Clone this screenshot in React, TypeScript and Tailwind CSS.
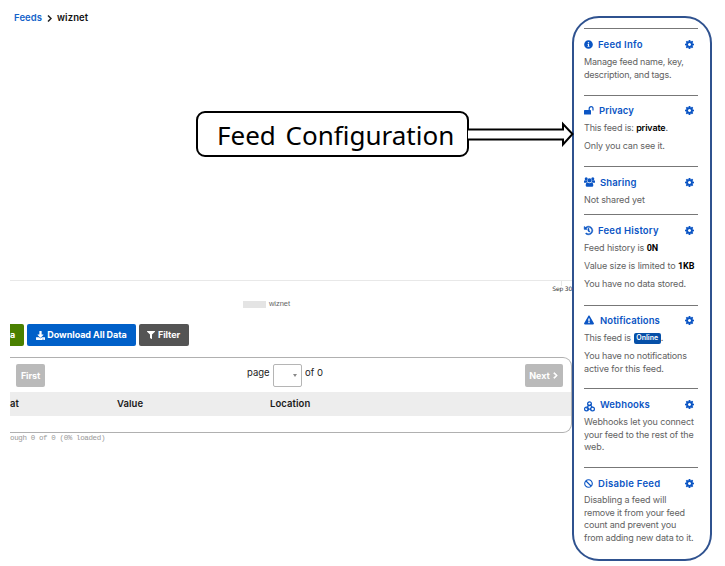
import type { ReactNode } from "react";
import {
  FaBan,
  FaChevronRight,
  FaDownload,
  FaExclamationTriangle,
  FaFilter,
  FaHistory,
  FaInfoCircle,
} from "react-icons/fa";

type SectionProps = {
  icon: ReactNode;
  title: string;
  titleClass: string;
  height: string;
  headClass?: string;
  bodyClass?: string;
  children: ReactNode;
};

function Gear() {
  return (
    <svg viewBox="0 128 1536 1536" className="ml-auto size-[9px]" fill="currentColor">
      <path d="M1024 896q0-106-75-181t-181-75-181 75-75 181 75 181 181 75 181-75 75-181zm512-109v222q0 12-8 23t-20 13l-185 28q-19 54-39 91 35 50 107 138 10 12 10 25t-9 23q-27 37-99 108t-94 71q-12 0-26-9l-138-108q-44 23-91 38-16 136-29 186-7 28-36 28h-222q-14 0-24.500-8.500t-11.500-21.500l-28-184q-49-16-90-37l-141 107q-10 9-25 9-14 0-25-11-126-114-165-168-7-10-7-23 0-12 8-23 15-21 51-66.500t54-70.500q-27-50-41-99l-183-27q-13-2-21-12.500t-8-23.500v-222q0-12 8-23t19-13l186-28q14-46 39-92-40-57-107-138-10-12-10-24 0-10 9-23 26-36 98.500-107.500t94.500-71.500q13 0 26 10l138 107q44-23 91-38 16-136 29-186 7-28 36-28h222q14 0 24.500 8.500t11.500 21.500l28 184q49 16 90 37l142-107q9-9 24-9 13 0 25 10 129 119 165 170 7 8 7 22 0 12-8 23-15 21-51 66.500t-54 70.500q26 50 41 98l183 28q13 2 21 12.500t8 23.500z" />
    </svg>
  );
}

function OpenLock() {
  return (
    <svg viewBox="0 0 10 9" className="mr-[5px] h-[9px] w-[10px]">
      <rect x="0" y="4" width="7" height="4.500" rx=".6" fill="currentColor" />
      <path d="M5.200 4.300V2.600a1.900 1.900 0 0 1 3.800 0V4.600" fill="none" stroke="currentColor" strokeWidth="1.200" />
    </svg>
  );
}

function People() {
  return (
    <svg viewBox="0 0 11 10" className="mr-[5px] h-[10px] w-[11px]" fill="currentColor">
      <circle cx="2.200" cy="1.700" r="1.500" />
      <circle cx="8.800" cy="1.700" r="1.500" />
      <circle cx="5.500" cy="3.400" r="2.100" />
      <path d="M0 5.500V4.600Q0 3.300 1 3.300H3Q3 4.600 3.700 5.300L2 5.800H.5Q0 5.800 0 5.500M11 5.500V4.600Q11 3.300 10 3.300H8Q8 4.600 7.300 5.300L9 5.800H10.500Q11 5.800 11 5.500" />
      <path d="M1.700 8.500Q1.700 5.500 3.500 5.500Q5.500 6.800 7.500 5.500Q9.300 5.500 9.300 8.500Q9.300 9.800 8 9.800H3Q1.700 9.800 1.700 8.500" />
    </svg>
  );
}

function Hooks() {
  return (
    <svg viewBox="0 0 11 11" className="mt-[4px] mr-[5px] size-[11px]" fill="none" stroke="currentColor" strokeWidth="1.200">
      <circle cx="5.500" cy="2.800" r="1.900" />
      <circle cx="2.500" cy="8" r="1.900" />
      <circle cx="8.500" cy="8" r="1.900" />
      <path d="M4.900 3.600L2.700 7.600M5.900 3.200L8.200 6.400M3 8.100H7.400" />
    </svg>
  );
}

function Section({ icon, title, titleClass, height, headClass = "h-[25px] pt-[5px]", bodyClass = "pt-[2px]", children }: SectionProps) {
  return (
    <section className={`shrink-0 border-t border-[#777] ${height}`}>
      <header className={`flex items-center pr-[4px] text-[#0b55c4] ${headClass}`}>
        {icon}
        <h2 className={`pt-[2px] whitespace-nowrap text-[9.5px] leading-3 font-semibold ${titleClass}`}>{title}</h2>
        <Gear />
      </header>
      <div className={`flex flex-col gap-[5.5px] text-[9px] leading-[12.6px] tracking-[-0.08px] whitespace-nowrap text-[#626262] ${bodyClass}`}>
        {children}
      </div>
    </section>
  );
}

function Sidebar() {
  return (
    <aside className="mt-4 flex h-[545px] w-[140px] shrink-0 flex-col rounded-[27px] border-2 border-[#2f528f] px-[10px] pt-[10px]">
      <div className="flex w-[114px] flex-col">
        <Section icon={<FaInfoCircle className="mr-[5px] size-[9px]" />} title="Feed Info" titleClass="tracking-[0.25px]" height="h-[67px]">
          <p>
            <span className="tracking-[-0.2px]">Manage feed name, key,</span>
            <br />
            <span className="tracking-[-0.22px]">description, and tags.</span>
          </p>
        </Section>
        <Section icon={<OpenLock />} title="Privacy" titleClass="tracking-[0.08px]" height="h-[71px]" headClass="h-[24px] pt-[4px]">
          <p className="tracking-[-0.15px]">
            This feed is: <b className="font-semibold text-black">private</b>.
          </p>
          <p className="tracking-[-0.15px]">Only you can see it.</p>
        </Section>
        <Section icon={<People />} title="Sharing" titleClass="tracking-[0.14px]" height="h-[48px]">
          <p className="tracking-[-0.12px]">Not shared yet</p>
        </Section>
        <Section icon={<FaHistory className="mr-[5px] size-[9px] overflow-visible" stroke="currentColor" strokeWidth="24" />} title="Feed History" titleClass="tracking-[0.22px]" height="h-[91px]">
          <p className="tracking-[-0.12px]">
            Feed history is <b className="font-['Roboto'] font-bold text-black">0N</b>
          </p>
          <p className="tracking-[-0.1px]">
            Value size is limited to <b className="font-['Roboto'] font-bold text-black">1KB</b>
          </p>
          <p className="tracking-[-0.15px]">You have no data stored.</p>
        </Section>
        <Section icon={<FaExclamationTriangle className="mr-[6px] size-[10px]" />} title="Notifications" titleClass="tracking-[0.08px]" height="h-[83px]" headClass="h-[24px] pt-[4px]">
          <p className="flex items-center tracking-[-0.2px]">
            This feed is
            <span className="ml-[3px] flex h-[11px] w-[27px] items-center justify-center rounded-[2px] bg-[#0650a8] text-[7px] font-semibold tracking-normal text-white">
              Online
            </span>
            .
          </p>
          <p>
            <span className="tracking-[-0.17px]">You have no notifications</span>
            <br />
            <span className="tracking-[-0.09px]">active for this feed.</span>
          </p>
        </Section>
        <Section icon={<Hooks />} title="Webhooks" titleClass="tracking-[0.14px]" height="h-[79px]">
          <p>
            <span className="tracking-[-0.14px]">Webhooks let you connect</span>
            <br />
            <span className="tracking-[-0.14px]">your feed to the rest of the</span>
            <br />
            web.
          </p>
        </Section>
        <Section icon={<FaBan className="mr-[5px] size-[9px]" />} title="Disable Feed" titleClass="tracking-[0.3px]" height="h-[80px]" bodyClass="pt-px">
          <p>
            <span className="tracking-[-0.12px]">Disabling a feed will</span>
            <br />
            <span className="tracking-[-0.17px]">remove it from your feed</span>
            <br />
            <span className="tracking-[-0.16px]">count and prevent you</span>
            <br />
            <span className="tracking-[-0.17px]">from adding new data to it.</span>
          </p>
        </Section>
      </div>
    </aside>
  );
}

function Callout() {
  return (
    <div className="relative z-10 mt-[85px] ml-[186px] flex h-[46px] items-center">
      <div className="flex h-[46px] w-[273px] shrink-0 items-center rounded-[9px] border-2 border-black pt-px pl-[19px] font-['Noto_Sans',sans-serif] text-[26px] leading-none font-normal whitespace-nowrap text-black [word-spacing:3px]">
        Feed Configuration
      </div>
      <svg width="106" height="26" viewBox="0 0 106 26" className="-ml-px shrink-0" fill="white" stroke="black" strokeWidth="2">
        <path d="M0 8.500H95V3L104.500 13L95 23.500V18.500H0" />
      </svg>
    </div>
  );
}

function Main() {
  return (
    <main className="flex w-[572px] shrink-0 flex-col pl-[10px]">
      <nav className="flex h-[26px] items-center pt-[10px] pl-[4px] text-[9.5px] font-semibold whitespace-nowrap">
        <span className="w-[29px] pt-px tracking-[0.1px] text-[#1363ca]">Feeds</span>
        <svg width="5" height="7" viewBox="0 0 5 7" className="mr-[5px] ml-[4px]" fill="none" stroke="#222" strokeWidth="1.500">
          <path d="M1 .5L4 3.500L1 6.500" />
        </svg>
        <span className="pt-px tracking-[0.1px] text-[#111]">wiznet</span>
      </nav>

      <div className="h-[255px] border-b border-[#e8e8e8]">
        <Callout />
      </div>
      <div className="flex h-[18px] flex-col items-end">
        <span className="mr-[10px] h-[5px] w-px bg-[#e5e5e5]" />
        <span className="font-['DejaVu_Sans',sans-serif] text-[6px] leading-[6px] tracking-[-0.2px] whitespace-nowrap text-[#333]">Sep 30</span>
      </div>
      <div className="flex h-[8px] items-center pl-[233px]">
        <span className="mt-[3px] h-[7px] w-[23px] bg-[#e4e4e4]" />
        <span className="mt-px ml-[3px] font-['Liberation_Sans',sans-serif] text-[7.5px] leading-[8px] tracking-[-0.05px] text-[#666]">wiznet</span>
      </div>

      <div className="mt-[17px] flex h-[22px] text-[9px] font-bold text-white">
        <button className="flex w-[14px] items-center rounded-r-[2px] bg-[#4a8000]">a</button>
        <button className="ml-[3px] flex w-[109px] items-center justify-center gap-[2px] rounded-[2px] bg-[#0060c9] tracking-[-0.05px] whitespace-nowrap">
          <FaDownload className="size-[9px]" />
          Download All Data
        </button>
        <button className="ml-[2.500px] flex w-[50px] items-center justify-center gap-[3px] rounded-[2px] bg-[#545454] tracking-[-0.1px]">
          <FaFilter className="size-[8px]" />
          Filter
        </button>
      </div>

      <div className="mt-[11px] flex h-[76px] flex-col rounded-r-[9px] border-y border-r border-[#b0b0b0]">
        <div className="flex h-[34px] items-start pt-[6px] text-[9px] font-bold text-white">
          <button className="ml-[6px] flex h-[23px] w-[29px] items-center justify-center rounded-[2px] bg-[#bababa] tracking-[-0.1px]">First</button>
          <div className="ml-[202px] flex h-[23px] text-[9.5px] font-normal text-[#222]">
            <span className="w-[26px] pt-[3px] leading-3">page</span>
            <span className="flex w-[29px] items-center justify-end rounded-[2px] border border-[#b5b5b5] pr-[4px]">
              <span className="border-x-[2.5px] border-t-[3px] border-x-transparent border-t-[#888]" />
            </span>
            <span className="pt-[3px] pl-[3px] leading-3 whitespace-nowrap">of 0</span>
          </div>
          <button className="mr-[8px] ml-auto flex h-[23px] w-[38px] items-center justify-center gap-[2px] rounded-[2px] bg-[#bababa] tracking-[-0.1px]">
            Next
            <FaChevronRight className="size-[7px]" stroke="currentColor" strokeWidth="45" />
          </button>
        </div>
        <div className="flex h-[24px] shrink-0 items-center bg-[#ededed] text-[9.5px] font-semibold tracking-[0.08px] whitespace-nowrap text-[#1a1a1a]">
          <span className="w-[107px]">at</span>
          <span className="w-[153px]">Value</span>
          <span>Location</span>
        </div>
      </div>
      <p className="mt-px font-['Liberation_Mono',monospace] text-[7.5px] leading-[9px] tracking-[-0.37px] whitespace-nowrap text-[#999]">
        ough 0 of 0 (0% loaded)
      </p>
    </main>
  );
}

export default function App() {
  return (
    <div className="flex h-[566px] w-[725px] overflow-hidden bg-white font-['Inter','Liberation_Sans',sans-serif]">
      <Main />
      <Sidebar />
    </div>
  );
}
